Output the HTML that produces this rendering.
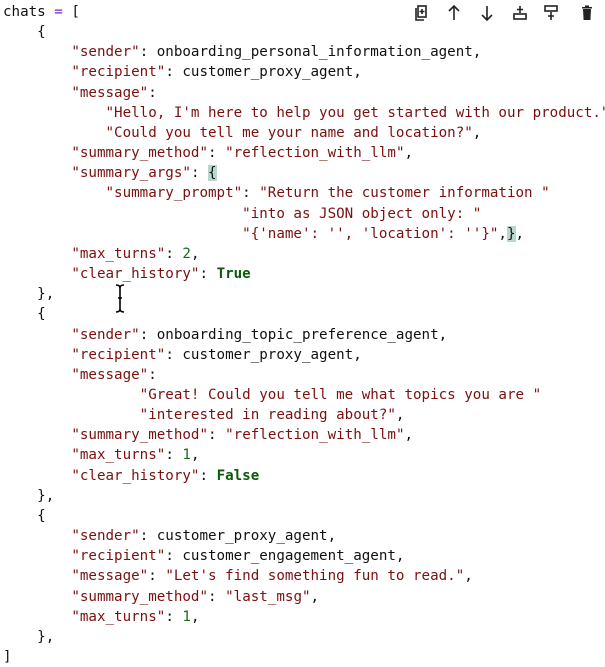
<!DOCTYPE html>
<html><head><meta charset="utf-8"><style>
html,body{margin:0;padding:0;background:#fff;width:605px;height:666px;overflow:hidden}
pre{margin:0;position:absolute;left:3px;top:2px;font-family:"DejaVu Sans Mono","Liberation Mono",monospace;font-size:14.2px;line-height:20.16px;color:#111}
.s{color:#7a1010}.o{color:#7a22c8}.n{color:#1a6b1a}.k{color:#0b5a0b;font-weight:bold}
.h{background:#b8d8cc}
</style></head><body>
<pre>chats <span class="o">=</span> [
    {
        <span class="s">"sender"</span>: onboarding_personal_information_agent,
        <span class="s">"recipient"</span>: customer_proxy_agent,
        <span class="s">"message"</span>:
            <span class="s">"Hello, I'm here to help you get started with our product."</span>
            <span class="s">"Could you tell me your name and location?"</span>,
        <span class="s">"summary_method"</span>: <span class="s">"reflection_with_llm"</span>,
        <span class="s">"summary_args"</span>: <span class="h">{</span>
            <span class="s">"summary_prompt"</span>: <span class="s">"Return the customer information "</span>
                            <span class="s">"into as JSON object only: "</span>
                            <span class="s">"{'name': '', 'location': ''}"</span>,<span class="h">}</span>,
        <span class="s">"max_turns"</span>: <span class="n">2</span>,
        <span class="s">"clear_history"</span>: <span class="k">True</span>
    },
    {
        <span class="s">"sender"</span>: onboarding_topic_preference_agent,
        <span class="s">"recipient"</span>: customer_proxy_agent,
        <span class="s">"message"</span>:
                <span class="s">"Great! Could you tell me what topics you are "</span>
                <span class="s">"interested in reading about?"</span>,
        <span class="s">"summary_method"</span>: <span class="s">"reflection_with_llm"</span>,
        <span class="s">"max_turns"</span>: <span class="n">1</span>,
        <span class="s">"clear_history"</span>: <span class="k">False</span>
    },
    {
        <span class="s">"sender"</span>: customer_proxy_agent,
        <span class="s">"recipient"</span>: customer_engagement_agent,
        <span class="s">"message"</span>: <span class="s">"Let's find something fun to read."</span>,
        <span class="s">"summary_method"</span>: <span class="s">"last_msg"</span>,
        <span class="s">"max_turns"</span>: <span class="n">1</span>,
    },
]</pre>
<div style="position:absolute;left:405px;top:0;width:200px;height:27px;background:#fff"></div>
<svg style="position:absolute;left:0;top:0" width="605" height="666">
<g fill="none" stroke="#222" stroke-width="1.6">
<path d="M416 8v12h8" /><rect x="418" y="6" width="8" height="11" fill="#fff"/><path d="M422 9v5M419.5 11.5h5"/>
<path d="M454 20V6M449 11l5-5 5 5"/>
<path d="M487 6v14M482 15l5 5 5-5"/>
<path d="M520 6v7M517 9.5h6"/><rect x="514" y="14" width="12" height="5"/>
<rect x="545" y="6" width="12" height="5"/><path d="M551 12v8M548 16h6"/>
</g>
<path d="M582 7h10v1.5h-10zM585 5.5h4v1.5h-4zM583 9h8l-.6 11h-6.8z" fill="#222"/>
<g stroke="#000" stroke-width="1.6" fill="none">
<path d="M116 285q4 0 4 3q0-3 4-3M120 288v21M116 312q4 0 4-3q0 3 4 3M118 298h4"/>
</g>
</svg>
</body></html>
